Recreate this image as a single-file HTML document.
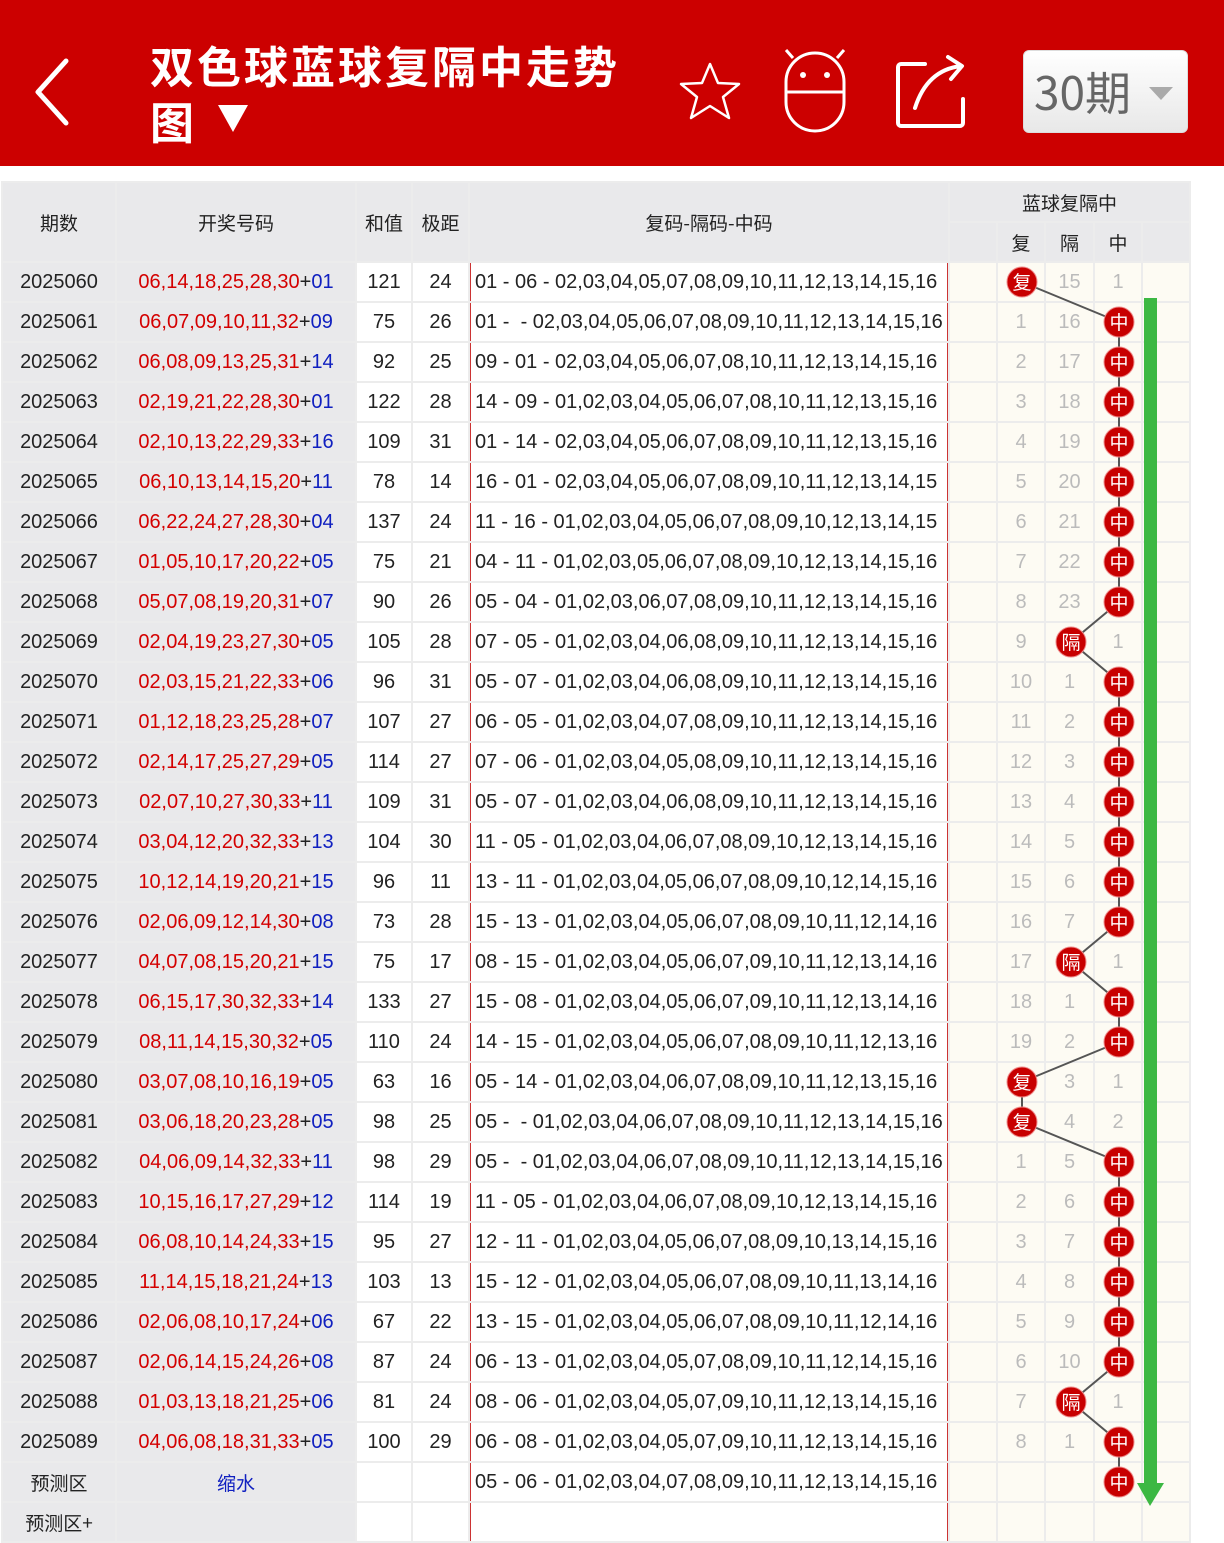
<!DOCTYPE html>
<html><head><meta charset="utf-8">
<style>
*{margin:0;padding:0;box-sizing:border-box}
body{width:1224px;height:1528px;overflow:hidden;background:#fff;font-family:"Liberation Sans","Noto Sans CJK SC",sans-serif;position:relative}
.hd{position:absolute;left:0;top:0;width:1224px;height:166px;background:#cc0000}
.title{position:absolute;left:150px;top:36px;color:#fff;font-size:44px;font-weight:bold;line-height:56px;font-family:"Noto Sans CJK SC",sans-serif;letter-spacing:3px}
.sel{position:absolute;left:1023px;top:50px;width:165px;height:83px;background:linear-gradient(#fff,#e8e8e8);border-radius:6px;border:1px solid #ddd}
.sel span{position:absolute;left:10px;top:12px;font-size:46px;color:#666;font-family:"Noto Sans CJK SC",sans-serif;line-height:56px}
.sel i{position:absolute;left:125px;top:36px;border-left:12px solid transparent;border-right:12px solid transparent;border-top:13px solid #aaa}
table{position:absolute;left:1px;top:181px;border-collapse:separate;border-spacing:2px;background:#ececec;table-layout:fixed;width:1190px}
td{height:38px;text-align:center;font-size:20px;color:#222;white-space:nowrap;overflow:hidden;padding:0;background:#fff}
td.g{background:#e9e9eb}
td.c{background:#fdfbf3;color:#bbb}
td.f{text-align:left;padding-left:5px;box-shadow:inset 1px 0 0 #c33,inset -1px 0 0 #c33}
.r{color:#d40000}.b{color:#1020c0}
th{font-weight:normal;font-size:19px;color:#222;background:#e9e9eb;height:38px;font-family:"Noto Sans CJK SC",sans-serif}
th.f{box-shadow:inset 1px 0 0 #c33,inset -1px 0 0 #c33}
svg.ov{position:absolute;left:0;top:0}
</style></head><body>
<div class="hd">
<svg width="1224" height="166" style="position:absolute;left:0;top:0">
<polyline points="66,61 38,92 66,123" fill="none" stroke="#fff" stroke-width="5" stroke-linecap="round" stroke-linejoin="round"/>
<polygon points="218,105 248,105 233,132" fill="#fff"/>
<polygon points="710,64 718,83 739,84 723,97 729,118 710,106 691,118 697,97 681,84 702,83" fill="none" stroke="#fff" stroke-width="2.5" stroke-linejoin="round"/>
<path d="M786,92 v-10 a29,29 0 0 1 58,0 v20 a29,29 0 0 1 -58,0 z M786,92 h58 M793,58 l-7,-8 M837,58 l7,-8" fill="none" stroke="#fff" stroke-width="3"/>
<circle cx="803" cy="75" r="3" fill="#fff"/><circle cx="827" cy="75" r="3" fill="#fff"/>
<path d="M925,64 h-24 a3,3 0 0 0 -3,3 v56 a3,3 0 0 0 3,3 h59 a3,3 0 0 0 3,-3 v-24" fill="none" stroke="#fff" stroke-width="4" stroke-linecap="round"/>
<path d="M915,108 q12,-38 46,-42 M948,57 l14,9 l-11,13" fill="none" stroke="#fff" stroke-width="4" stroke-linecap="round" stroke-linejoin="round"/>
</svg>
<div class="title">双色球蓝球复隔中走势<br>图</div>
<div class="sel"><span>30期</span><i></i></div>
</div>
<table>
<colgroup><col style="width:112px"><col style="width:238px"><col style="width:54px"><col style="width:55px"><col style="width:478px"><col style="width:46px"><col style="width:46px"><col style="width:47px"><col style="width:46px"><col style="width:46px"></colgroup>
<tr><th rowspan="2">期数</th><th rowspan="2">开奖号码</th><th rowspan="2">和值</th><th rowspan="2">极距</th><th rowspan="2">复码-隔码-中码</th><th colspan="5">蓝球复隔中</th></tr>
<tr><th></th><th>复</th><th>隔</th><th>中</th><th></th></tr>
<tr><td class="g">2025060</td><td class="g"><span class="r">06,14,18,25,28,30</span>+<span class="b">01</span></td><td>121</td><td>24</td><td class="f">01 - 06 - 02,03,04,05,07,08,09,10,11,12,13,14,15,16</td><td class="c"></td><td class="c"></td><td class="c">15</td><td class="c">1</td><td class="c"></td></tr>
<tr><td class="g">2025061</td><td class="g"><span class="r">06,07,09,10,11,32</span>+<span class="b">09</span></td><td>75</td><td>26</td><td class="f">01 -&nbsp; - 02,03,04,05,06,07,08,09,10,11,12,13,14,15,16</td><td class="c"></td><td class="c">1</td><td class="c">16</td><td class="c"></td><td class="c"></td></tr>
<tr><td class="g">2025062</td><td class="g"><span class="r">06,08,09,13,25,31</span>+<span class="b">14</span></td><td>92</td><td>25</td><td class="f">09 - 01 - 02,03,04,05,06,07,08,10,11,12,13,14,15,16</td><td class="c"></td><td class="c">2</td><td class="c">17</td><td class="c"></td><td class="c"></td></tr>
<tr><td class="g">2025063</td><td class="g"><span class="r">02,19,21,22,28,30</span>+<span class="b">01</span></td><td>122</td><td>28</td><td class="f">14 - 09 - 01,02,03,04,05,06,07,08,10,11,12,13,15,16</td><td class="c"></td><td class="c">3</td><td class="c">18</td><td class="c"></td><td class="c"></td></tr>
<tr><td class="g">2025064</td><td class="g"><span class="r">02,10,13,22,29,33</span>+<span class="b">16</span></td><td>109</td><td>31</td><td class="f">01 - 14 - 02,03,04,05,06,07,08,09,10,11,12,13,15,16</td><td class="c"></td><td class="c">4</td><td class="c">19</td><td class="c"></td><td class="c"></td></tr>
<tr><td class="g">2025065</td><td class="g"><span class="r">06,10,13,14,15,20</span>+<span class="b">11</span></td><td>78</td><td>14</td><td class="f">16 - 01 - 02,03,04,05,06,07,08,09,10,11,12,13,14,15</td><td class="c"></td><td class="c">5</td><td class="c">20</td><td class="c"></td><td class="c"></td></tr>
<tr><td class="g">2025066</td><td class="g"><span class="r">06,22,24,27,28,30</span>+<span class="b">04</span></td><td>137</td><td>24</td><td class="f">11 - 16 - 01,02,03,04,05,06,07,08,09,10,12,13,14,15</td><td class="c"></td><td class="c">6</td><td class="c">21</td><td class="c"></td><td class="c"></td></tr>
<tr><td class="g">2025067</td><td class="g"><span class="r">01,05,10,17,20,22</span>+<span class="b">05</span></td><td>75</td><td>21</td><td class="f">04 - 11 - 01,02,03,05,06,07,08,09,10,12,13,14,15,16</td><td class="c"></td><td class="c">7</td><td class="c">22</td><td class="c"></td><td class="c"></td></tr>
<tr><td class="g">2025068</td><td class="g"><span class="r">05,07,08,19,20,31</span>+<span class="b">07</span></td><td>90</td><td>26</td><td class="f">05 - 04 - 01,02,03,06,07,08,09,10,11,12,13,14,15,16</td><td class="c"></td><td class="c">8</td><td class="c">23</td><td class="c"></td><td class="c"></td></tr>
<tr><td class="g">2025069</td><td class="g"><span class="r">02,04,19,23,27,30</span>+<span class="b">05</span></td><td>105</td><td>28</td><td class="f">07 - 05 - 01,02,03,04,06,08,09,10,11,12,13,14,15,16</td><td class="c"></td><td class="c">9</td><td class="c"></td><td class="c">1</td><td class="c"></td></tr>
<tr><td class="g">2025070</td><td class="g"><span class="r">02,03,15,21,22,33</span>+<span class="b">06</span></td><td>96</td><td>31</td><td class="f">05 - 07 - 01,02,03,04,06,08,09,10,11,12,13,14,15,16</td><td class="c"></td><td class="c">10</td><td class="c">1</td><td class="c"></td><td class="c"></td></tr>
<tr><td class="g">2025071</td><td class="g"><span class="r">01,12,18,23,25,28</span>+<span class="b">07</span></td><td>107</td><td>27</td><td class="f">06 - 05 - 01,02,03,04,07,08,09,10,11,12,13,14,15,16</td><td class="c"></td><td class="c">11</td><td class="c">2</td><td class="c"></td><td class="c"></td></tr>
<tr><td class="g">2025072</td><td class="g"><span class="r">02,14,17,25,27,29</span>+<span class="b">05</span></td><td>114</td><td>27</td><td class="f">07 - 06 - 01,02,03,04,05,08,09,10,11,12,13,14,15,16</td><td class="c"></td><td class="c">12</td><td class="c">3</td><td class="c"></td><td class="c"></td></tr>
<tr><td class="g">2025073</td><td class="g"><span class="r">02,07,10,27,30,33</span>+<span class="b">11</span></td><td>109</td><td>31</td><td class="f">05 - 07 - 01,02,03,04,06,08,09,10,11,12,13,14,15,16</td><td class="c"></td><td class="c">13</td><td class="c">4</td><td class="c"></td><td class="c"></td></tr>
<tr><td class="g">2025074</td><td class="g"><span class="r">03,04,12,20,32,33</span>+<span class="b">13</span></td><td>104</td><td>30</td><td class="f">11 - 05 - 01,02,03,04,06,07,08,09,10,12,13,14,15,16</td><td class="c"></td><td class="c">14</td><td class="c">5</td><td class="c"></td><td class="c"></td></tr>
<tr><td class="g">2025075</td><td class="g"><span class="r">10,12,14,19,20,21</span>+<span class="b">15</span></td><td>96</td><td>11</td><td class="f">13 - 11 - 01,02,03,04,05,06,07,08,09,10,12,14,15,16</td><td class="c"></td><td class="c">15</td><td class="c">6</td><td class="c"></td><td class="c"></td></tr>
<tr><td class="g">2025076</td><td class="g"><span class="r">02,06,09,12,14,30</span>+<span class="b">08</span></td><td>73</td><td>28</td><td class="f">15 - 13 - 01,02,03,04,05,06,07,08,09,10,11,12,14,16</td><td class="c"></td><td class="c">16</td><td class="c">7</td><td class="c"></td><td class="c"></td></tr>
<tr><td class="g">2025077</td><td class="g"><span class="r">04,07,08,15,20,21</span>+<span class="b">15</span></td><td>75</td><td>17</td><td class="f">08 - 15 - 01,02,03,04,05,06,07,09,10,11,12,13,14,16</td><td class="c"></td><td class="c">17</td><td class="c"></td><td class="c">1</td><td class="c"></td></tr>
<tr><td class="g">2025078</td><td class="g"><span class="r">06,15,17,30,32,33</span>+<span class="b">14</span></td><td>133</td><td>27</td><td class="f">15 - 08 - 01,02,03,04,05,06,07,09,10,11,12,13,14,16</td><td class="c"></td><td class="c">18</td><td class="c">1</td><td class="c"></td><td class="c"></td></tr>
<tr><td class="g">2025079</td><td class="g"><span class="r">08,11,14,15,30,32</span>+<span class="b">05</span></td><td>110</td><td>24</td><td class="f">14 - 15 - 01,02,03,04,05,06,07,08,09,10,11,12,13,16</td><td class="c"></td><td class="c">19</td><td class="c">2</td><td class="c"></td><td class="c"></td></tr>
<tr><td class="g">2025080</td><td class="g"><span class="r">03,07,08,10,16,19</span>+<span class="b">05</span></td><td>63</td><td>16</td><td class="f">05 - 14 - 01,02,03,04,06,07,08,09,10,11,12,13,15,16</td><td class="c"></td><td class="c"></td><td class="c">3</td><td class="c">1</td><td class="c"></td></tr>
<tr><td class="g">2025081</td><td class="g"><span class="r">03,06,18,20,23,28</span>+<span class="b">05</span></td><td>98</td><td>25</td><td class="f">05 -&nbsp; - 01,02,03,04,06,07,08,09,10,11,12,13,14,15,16</td><td class="c"></td><td class="c"></td><td class="c">4</td><td class="c">2</td><td class="c"></td></tr>
<tr><td class="g">2025082</td><td class="g"><span class="r">04,06,09,14,32,33</span>+<span class="b">11</span></td><td>98</td><td>29</td><td class="f">05 -&nbsp; - 01,02,03,04,06,07,08,09,10,11,12,13,14,15,16</td><td class="c"></td><td class="c">1</td><td class="c">5</td><td class="c"></td><td class="c"></td></tr>
<tr><td class="g">2025083</td><td class="g"><span class="r">10,15,16,17,27,29</span>+<span class="b">12</span></td><td>114</td><td>19</td><td class="f">11 - 05 - 01,02,03,04,06,07,08,09,10,12,13,14,15,16</td><td class="c"></td><td class="c">2</td><td class="c">6</td><td class="c"></td><td class="c"></td></tr>
<tr><td class="g">2025084</td><td class="g"><span class="r">06,08,10,14,24,33</span>+<span class="b">15</span></td><td>95</td><td>27</td><td class="f">12 - 11 - 01,02,03,04,05,06,07,08,09,10,13,14,15,16</td><td class="c"></td><td class="c">3</td><td class="c">7</td><td class="c"></td><td class="c"></td></tr>
<tr><td class="g">2025085</td><td class="g"><span class="r">11,14,15,18,21,24</span>+<span class="b">13</span></td><td>103</td><td>13</td><td class="f">15 - 12 - 01,02,03,04,05,06,07,08,09,10,11,13,14,16</td><td class="c"></td><td class="c">4</td><td class="c">8</td><td class="c"></td><td class="c"></td></tr>
<tr><td class="g">2025086</td><td class="g"><span class="r">02,06,08,10,17,24</span>+<span class="b">06</span></td><td>67</td><td>22</td><td class="f">13 - 15 - 01,02,03,04,05,06,07,08,09,10,11,12,14,16</td><td class="c"></td><td class="c">5</td><td class="c">9</td><td class="c"></td><td class="c"></td></tr>
<tr><td class="g">2025087</td><td class="g"><span class="r">02,06,14,15,24,26</span>+<span class="b">08</span></td><td>87</td><td>24</td><td class="f">06 - 13 - 01,02,03,04,05,07,08,09,10,11,12,14,15,16</td><td class="c"></td><td class="c">6</td><td class="c">10</td><td class="c"></td><td class="c"></td></tr>
<tr><td class="g">2025088</td><td class="g"><span class="r">01,03,13,18,21,25</span>+<span class="b">06</span></td><td>81</td><td>24</td><td class="f">08 - 06 - 01,02,03,04,05,07,09,10,11,12,13,14,15,16</td><td class="c"></td><td class="c">7</td><td class="c"></td><td class="c">1</td><td class="c"></td></tr>
<tr><td class="g">2025089</td><td class="g"><span class="r">04,06,08,18,31,33</span>+<span class="b">05</span></td><td>100</td><td>29</td><td class="f">06 - 08 - 01,02,03,04,05,07,09,10,11,12,13,14,15,16</td><td class="c"></td><td class="c">8</td><td class="c">1</td><td class="c"></td><td class="c"></td></tr>
<tr><td class="g" style="font-family:'Noto Sans CJK SC',sans-serif;font-size:19px">预测区</td><td class="g" style="font-family:'Noto Sans CJK SC',sans-serif;font-size:19px"><span class="b">缩水</span></td><td></td><td></td><td class="f">05 - 06 - 01,02,03,04,07,08,09,10,11,12,13,14,15,16</td><td class="c"></td><td class="c"></td><td class="c"></td><td class="c"></td><td class="c"></td></tr>
<tr><td class="g" style="font-family:'Noto Sans CJK SC',sans-serif;font-size:19px;vertical-align:top;padding-top:6px">预测区+</td><td class="g"></td><td></td><td></td><td class="f"></td><td class="c"></td><td class="c"></td><td class="c"></td><td class="c"></td><td class="c"></td></tr>
</table>
<svg class="ov" width="1224" height="1528">
<rect x="1144" y="298" width="13" height="1188" fill="#3cb843"/>
<polygon points="1137,1483 1164,1483 1150,1506" fill="#3cb843"/>
<polyline fill="none" stroke="#555" stroke-width="2" points="1022,282 1119,322 1119,602 1071,642 1119,682 1119,922 1071,962 1119,1002 1119,1042 1022,1082 1022,1122 1119,1162 1119,1362 1071,1402 1119,1442 1119,1482"/>
<g fill="#c80000" stroke="#e88" stroke-width="1">
<circle cx="1022" cy="282" r="15"/><circle cx="1119" cy="322" r="15"/><circle cx="1119" cy="362" r="15"/><circle cx="1119" cy="402" r="15"/><circle cx="1119" cy="442" r="15"/><circle cx="1119" cy="482" r="15"/><circle cx="1119" cy="522" r="15"/><circle cx="1119" cy="562" r="15"/><circle cx="1119" cy="602" r="15"/><circle cx="1071" cy="642" r="15"/><circle cx="1119" cy="682" r="15"/><circle cx="1119" cy="722" r="15"/><circle cx="1119" cy="762" r="15"/><circle cx="1119" cy="802" r="15"/><circle cx="1119" cy="842" r="15"/><circle cx="1119" cy="882" r="15"/><circle cx="1119" cy="922" r="15"/><circle cx="1071" cy="962" r="15"/><circle cx="1119" cy="1002" r="15"/><circle cx="1119" cy="1042" r="15"/><circle cx="1022" cy="1082" r="15"/><circle cx="1022" cy="1122" r="15"/><circle cx="1119" cy="1162" r="15"/><circle cx="1119" cy="1202" r="15"/><circle cx="1119" cy="1242" r="15"/><circle cx="1119" cy="1282" r="15"/><circle cx="1119" cy="1322" r="15"/><circle cx="1119" cy="1362" r="15"/><circle cx="1071" cy="1402" r="15"/><circle cx="1119" cy="1442" r="15"/><circle cx="1119" cy="1482" r="15"/>
</g>
<g fill="#fff" font-size="19" text-anchor="middle" font-family="Noto Sans CJK SC,sans-serif">
<text x="1022" y="289">复</text><text x="1119" y="329">中</text><text x="1119" y="369">中</text><text x="1119" y="409">中</text><text x="1119" y="449">中</text><text x="1119" y="489">中</text><text x="1119" y="529">中</text><text x="1119" y="569">中</text><text x="1119" y="609">中</text><text x="1071" y="649">隔</text><text x="1119" y="689">中</text><text x="1119" y="729">中</text><text x="1119" y="769">中</text><text x="1119" y="809">中</text><text x="1119" y="849">中</text><text x="1119" y="889">中</text><text x="1119" y="929">中</text><text x="1071" y="969">隔</text><text x="1119" y="1009">中</text><text x="1119" y="1049">中</text><text x="1022" y="1089">复</text><text x="1022" y="1129">复</text><text x="1119" y="1169">中</text><text x="1119" y="1209">中</text><text x="1119" y="1249">中</text><text x="1119" y="1289">中</text><text x="1119" y="1329">中</text><text x="1119" y="1369">中</text><text x="1071" y="1409">隔</text><text x="1119" y="1449">中</text><text x="1119" y="1489">中</text>
</g>
</svg>
</body></html>
